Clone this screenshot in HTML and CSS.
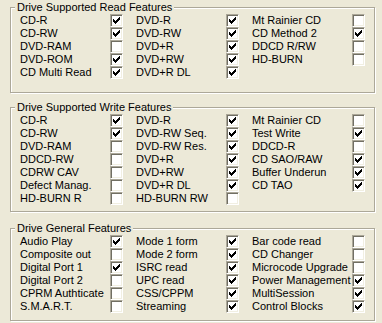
FILE: index.html
```html
<!DOCTYPE html>
<html>
<head>
<meta charset="utf-8">
<link rel="stylesheet" href="styles.css">
</head>
<body>
<div class="panel">
  <section class="group g-read">
    <div class="legend">Drive Supported Read Features</div>
    <div class="grid">
      <div class="item"><span>CD-R</span><span class="cb on"></span></div>
      <div class="item"><span>DVD-R</span><span class="cb on"></span></div>
      <div class="item"><span>Mt Rainier CD</span><span class="cb"></span></div>
      <div class="item"><span>CD-RW</span><span class="cb on"></span></div>
      <div class="item"><span>DVD-RW</span><span class="cb on"></span></div>
      <div class="item"><span>CD Method 2</span><span class="cb on"></span></div>
      <div class="item"><span>DVD-RAM</span><span class="cb"></span></div>
      <div class="item"><span>DVD+R</span><span class="cb on"></span></div>
      <div class="item"><span>DDCD R/RW</span><span class="cb"></span></div>
      <div class="item"><span>DVD-ROM</span><span class="cb on"></span></div>
      <div class="item"><span>DVD+RW</span><span class="cb on"></span></div>
      <div class="item"><span>HD-BURN</span><span class="cb"></span></div>
      <div class="item"><span>CD Multi Read</span><span class="cb on"></span></div>
      <div class="item"><span>DVD+R DL</span><span class="cb on"></span></div>
    </div>
  </section>

  <section class="group g-write">
    <div class="legend">Drive Supported Write Features</div>
    <div class="grid">
      <div class="item"><span>CD-R</span><span class="cb on"></span></div>
      <div class="item"><span>DVD-R</span><span class="cb on"></span></div>
      <div class="item"><span>Mt Rainier CD</span><span class="cb"></span></div>
      <div class="item"><span>CD-RW</span><span class="cb on"></span></div>
      <div class="item"><span>DVD-RW Seq.</span><span class="cb on"></span></div>
      <div class="item"><span>Test Write</span><span class="cb on"></span></div>
      <div class="item"><span>DVD-RAM</span><span class="cb"></span></div>
      <div class="item"><span>DVD-RW Res.</span><span class="cb on"></span></div>
      <div class="item"><span>DDCD-R</span><span class="cb"></span></div>
      <div class="item"><span>DDCD-RW</span><span class="cb"></span></div>
      <div class="item"><span>DVD+R</span><span class="cb on"></span></div>
      <div class="item"><span>CD SAO/RAW</span><span class="cb on"></span></div>
      <div class="item"><span>CDRW CAV</span><span class="cb"></span></div>
      <div class="item"><span>DVD+RW</span><span class="cb on"></span></div>
      <div class="item"><span>Buffer Underun</span><span class="cb on"></span></div>
      <div class="item"><span>Defect Manag.</span><span class="cb"></span></div>
      <div class="item"><span>DVD+R DL</span><span class="cb on"></span></div>
      <div class="item"><span>CD TAO</span><span class="cb on"></span></div>
      <div class="item"><span>HD-BURN R</span><span class="cb"></span></div>
      <div class="item"><span>HD-BURN RW</span><span class="cb"></span></div>
    </div>
  </section>

  <section class="group g-general">
    <div class="legend">Drive General Features</div>
    <div class="grid">
      <div class="item"><span>Audio Play</span><span class="cb on"></span></div>
      <div class="item"><span>Mode 1 form</span><span class="cb on"></span></div>
      <div class="item"><span>Bar code read</span><span class="cb"></span></div>
      <div class="item"><span>Composite out</span><span class="cb"></span></div>
      <div class="item"><span>Mode 2 form</span><span class="cb on"></span></div>
      <div class="item"><span>CD Changer</span><span class="cb"></span></div>
      <div class="item"><span>Digital Port 1</span><span class="cb on"></span></div>
      <div class="item"><span>ISRC read</span><span class="cb on"></span></div>
      <div class="item"><span>Microcode Upgrade</span><span class="cb"></span></div>
      <div class="item"><span>Digital Port 2</span><span class="cb"></span></div>
      <div class="item"><span>UPC read</span><span class="cb on"></span></div>
      <div class="item"><span>Power Management</span><span class="cb on"></span></div>
      <div class="item"><span>CPRM Authticate</span><span class="cb"></span></div>
      <div class="item"><span>CSS/CPPM</span><span class="cb on"></span></div>
      <div class="item"><span>MultiSession</span><span class="cb on"></span></div>
      <div class="item"><span>S.M.A.R.T.</span><span class="cb"></span></div>
      <div class="item"><span>Streaming</span><span class="cb on"></span></div>
      <div class="item"><span>Control Blocks</span><span class="cb on"></span></div>
    </div>
  </section>
</div>
</body>
</html>
```
FILE: styles.css
```css
html, body {
  margin: 0;
  padding: 0;
  background: #ECE9D8;
}
body {
  font-family: "Liberation Sans", Arial, sans-serif;
  font-size: 11px;
  color: #000;
  width: 382px;
  height: 323px;
  overflow: hidden;
}
.panel {
  padding: 7px 0 0 10px;
}
.group {
  box-sizing: border-box;
  width: 365px;
  border: 1px solid #ACA899;
  box-shadow: 1px 1px 0 #fff, inset 1px 1px 0 #fff;
}
.g-read {
  padding-bottom: 13px;
}
.g-write {
  margin-top: 14px;
  padding-bottom: 6px;
}
.g-general {
  margin-top: 16px;
  padding-bottom: 7px;
}
.legend {
  width: fit-content;
  margin: -7px 0 0 4px;
  padding: 0 2px;
  height: 13px;
  line-height: 13px;
  background: #ECE9D8;
  white-space: nowrap;
}
.grid {
  display: grid;
  grid-template-columns: 103px 103px 113px;
  grid-auto-rows: 13px;
  column-gap: 13px;
  padding: 0 9px;
}
.item {
  display: flex;
  align-items: center;
  justify-content: space-between;
  height: 13px;
  line-height: 13px;
  white-space: nowrap;
}
.cb {
  position: relative;
  flex: none;
  box-sizing: border-box;
  width: 13px;
  height: 13px;
  background: #fff;
  border: 1px solid;
  border-color: #ACA899 #fff #fff #ACA899;
  box-shadow: inset 1px 1px 0 #716F64, inset -1px -1px 0 #F1EFE2;
}
.cb.on::after {
  content: "";
  position: absolute;
  left: 2px;
  top: 2px;
  width: 7px;
  height: 7px;
  background: #000;
  clip-path: polygon(0 2px, 1px 2px, 1px 3px, 2px 3px, 2px 4px, 3px 4px, 3px 3px, 4px 3px, 4px 2px, 5px 2px, 5px 1px, 6px 1px, 6px 0, 7px 0, 7px 3px, 6px 3px, 6px 4px, 5px 4px, 5px 5px, 4px 5px, 4px 6px, 3px 6px, 3px 7px, 2px 7px, 2px 6px, 1px 6px, 1px 5px, 0 5px);
}
```
